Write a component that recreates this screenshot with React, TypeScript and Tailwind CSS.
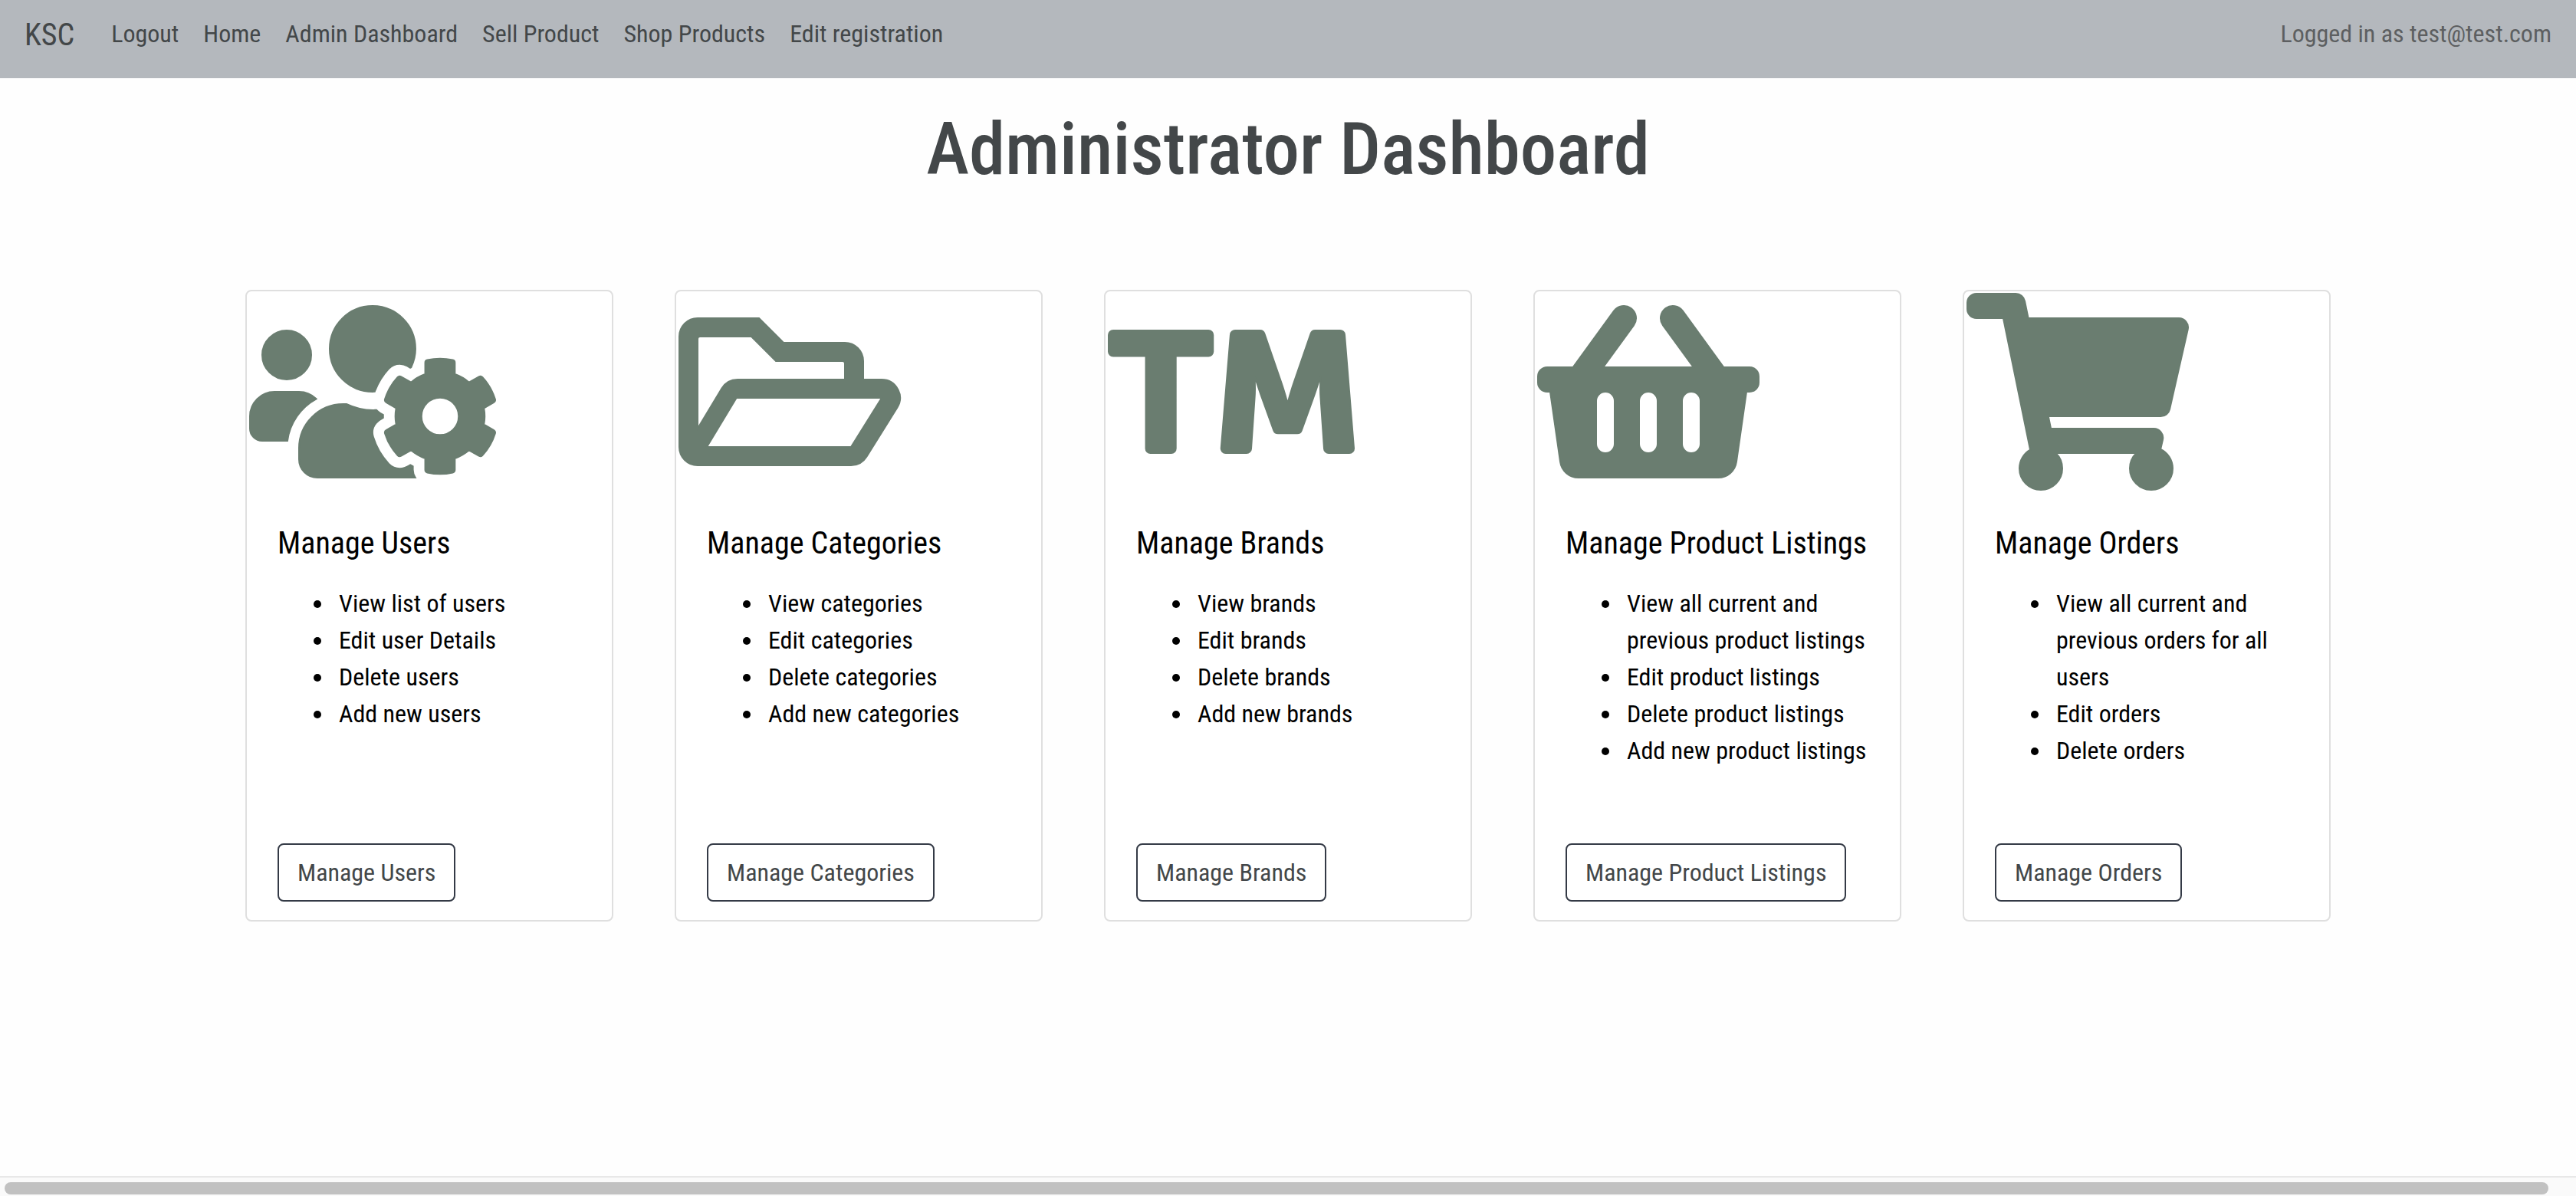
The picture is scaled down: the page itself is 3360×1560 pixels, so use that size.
import type { IconType } from "react-icons";
import { FaUsersCog, FaRegFolderOpen, FaTrademark, FaShoppingBasket, FaShoppingCart } from "react-icons/fa";

type Section = { title: string; icon: IconType; iconWidth: string; actions: string[] };

const navLinks = ["Logout", "Home", "Admin Dashboard", "Sell Product", "Shop Products", "Edit registration"];

const sections: Section[] = [
  {
    title: "Manage Users",
    icon: FaUsersCog,
    iconWidth: "w-80",
    actions: ["View list of users", "Edit user Details", "Delete users", "Add new users"],
  },
  {
    title: "Manage Categories",
    icon: FaRegFolderOpen,
    iconWidth: "w-72",
    actions: ["View categories", "Edit categories", "Delete categories", "Add new categories"],
  },
  {
    title: "Manage Brands",
    icon: FaTrademark,
    iconWidth: "w-80",
    actions: ["View brands", "Edit brands", "Delete brands", "Add new brands"],
  },
  {
    title: "Manage Product Listings",
    icon: FaShoppingBasket,
    iconWidth: "w-72",
    actions: [
      "View all current and previous product listings",
      "Edit product listings",
      "Delete product listings",
      "Add new product listings",
    ],
  },
  {
    title: "Manage Orders",
    icon: FaShoppingCart,
    iconWidth: "w-72",
    actions: ["View all current and previous orders for all users", "Edit orders", "Delete orders"],
  },
];

function NavBar() {
  return (
    <nav className="flex items-start justify-between bg-[#b4b8bd] px-8 pt-4 pb-[26px] text-[#434749]">
      <div className="flex items-start">
        <a href="#" className="mr-8 text-[40px] leading-[60px]">
          KSC
        </a>
        <ul className="flex">
          {navLinks.map((label) => (
            <li key={label}>
              <a href="#" className="block px-4 leading-[56px]">
                {label}
              </a>
            </li>
          ))}
        </ul>
      </div>
      <p className="leading-[56px] text-[#5d5f61]">Logged in as test@test.com</p>
    </nav>
  );
}

function SectionCard({ title, icon: Icon, iconWidth, actions }: Section) {
  return (
    <article className="flex min-h-[824px] flex-col rounded-lg border-2 border-[#dfdfdf] bg-white">
      <Icon
        className={`mt-[3px] ml-1 h-64 self-start overflow-visible text-[#6a7d70] ${iconWidth}`}
        strokeWidth={4}
        aria-hidden
      />
      <div className="flex grow flex-col items-start px-10 pt-[46px] pb-6">
        <h2 className="text-[40px] leading-[48px]">{title}</h2>
        <ul className="mt-[30px] mb-16 list-disc pl-[74px] leading-[48px]">
          {actions.map((action) => (
            <li key={action} className="pl-1.5">
              {action}
            </li>
          ))}
        </ul>
        <button
          type="button"
          className="mt-auto rounded-lg border-2 border-[#343a46] px-6 py-3 leading-[48px] whitespace-nowrap text-[#434749]"
        >
          {title}
        </button>
      </div>
    </article>
  );
}

export default function App() {
  return (
    <div className="flex min-h-screen flex-col bg-[#fefefe] font-['Roboto_Condensed',Roboto,sans-serif] text-[32px] text-black">
      <NavBar />
      <main className="grow px-80">
        <h1 className="mt-[38px] text-center text-[95px] leading-[110px] font-medium text-[#434749]">
          Administrator Dashboard
        </h1>
        <div className="mt-32 grid grid-cols-5 gap-20">
          {sections.map((section) => (
            <SectionCard key={section.title} {...section} />
          ))}
        </div>
      </main>
      <div className="border-t-2 border-[#e8e8e8] bg-[#fafafa] pt-1.5 pr-9 pb-0.5 pl-1.5">
        <div className="h-4 rounded-full bg-[#c1c1c1]" />
      </div>
    </div>
  );
}
